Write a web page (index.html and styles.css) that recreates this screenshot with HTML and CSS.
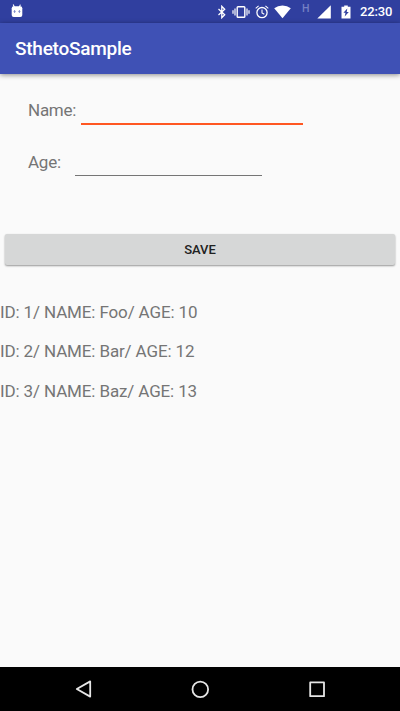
FILE: index.html
```
<!DOCTYPE html>
<html lang="en">

<head>
    <meta charset="UTF-8">
    <meta name="viewport" content="width=device-width, initial-scale=1.0">
    <title>SthetoSample</title>
    <link rel="stylesheet" href="styles.css">
</head>

<body>
    <div class="status-bar">
        <svg class="android" width="12" height="14" viewBox="0 0 12 14">
            <path d="M2.2 .6l1.2 2.6M9.4 .6L8.3 3.2" stroke="#fff" stroke-width="1.1" />
            <rect x=".7" y="2.3" width="10.6" height="10.6" rx="2" fill="#fff" />
            <path d="M3.6 6v3M2.6 7.5h2M8.4 6v3M7.4 7.5h2" stroke="#7c88c8" stroke-width=".9" />
        </svg>
        <div class="status-icons">
            <svg width="10" height="14" viewBox="0 0 10 14">
                <path d="M1.5 4l6.2 5.8L4.8 12.7V1.3L7.7 4.2 1.5 10" fill="none" stroke="#fff" stroke-width="1.3" />
            </svg>
            <svg class="vibrate" width="18" height="14" viewBox="0 0 18 14">
                <rect x="5.2" y="1.7" width="7.6" height="10.6" rx=".8" fill="none" stroke="#fff" stroke-width="1.4" />
                <path d="M3 3.5v7M15 3.5v7M1 5.2v3.6M17 5.2v3.6" stroke="#fff" stroke-width="1.2" />
            </svg>
            <svg class="alarm" width="14" height="14" viewBox="0 0 14 14">
                <circle cx="7" cy="7.6" r="5.1" fill="none" stroke="#fff" stroke-width="1.3" />
                <path d="M.7 3.3l2.9-2.4M13.3 3.3l-2.9-2.4M7 4.6v3.3l2.3 1.4" fill="none" stroke="#fff" stroke-width="1.1" />
            </svg>
            <svg class="wifi" width="17" height="14" viewBox="0 0 17 14">
                <path d="M8.5 13.2L.2 3.2Q3.8.6 8.5.6t8.3 2.6z" fill="#fff" />
            </svg>
            <span class="network">H</span>
            <svg class="signal" width="14" height="14" viewBox="0 0 14 14">
                <path d="M13.8.2v13.3H.3z" fill="#fff" />
            </svg>
            <svg class="battery" width="10" height="14" viewBox="0 0 10 14">
                <path d="M.5 1.7h2.7V.6h3.6v1.1h2.7v11.7h-9z" fill="#fff" />
                <path d="M6.3 3.4L2.4 7.8h2.1l-.8 3.6L7.8 7H5.7z" fill="#303f9f" />
            </svg>
            <span class="time">22:30</span>
        </div>
    </div>

    <div class="header">
        <h1>SthetoSample</h1>
    </div>

    <div class="content">
        <div class="field">
            <label for="name">Name:</label>
            <input id="name" class="name-input" type="text">
        </div>
        <div class="field">
            <label for="age">Age:</label>
            <input id="age" class="age-input" type="text">
        </div>

        <button class="btn">SAVE</button>

        <ul class="list">
            <li>ID: 1/ NAME: Foo/ AGE: 10</li>
            <li>ID: 2/ NAME: Bar/ AGE: 12</li>
            <li>ID: 3/ NAME: Baz/ AGE: 13</li>
        </ul>
    </div>

    <div class="nav-bar">
        <svg width="20" height="20" viewBox="0 0 20 20">
            <path d="M17.2 2.4v15.2L3.8 10z" />
        </svg>
        <svg width="20" height="20" viewBox="0 0 20 20">
            <circle cx="10.3" cy="10.4" r="7.8" />
        </svg>
        <svg width="20" height="20" viewBox="0 0 20 20">
            <rect x="3.2" y="3.4" width="13.8" height="13.8" />
        </svg>
    </div>
</body>

</html>
```
FILE: styles.css
```
* {
    margin: 0;
    padding: 0;
    box-sizing: border-box;
}

body {
    width: 100%;
    height: 100vh;
    display: flex;
    flex-direction: column;
    overflow: hidden;
    background: #fafafa;
    color: #757575;
    font-family: Roboto, sans-serif;
}

.status-bar {
    height: 23px;
    padding: 0 8px 0 11px;
    display: flex;
    justify-content: space-between;
    background: #303f9f;
    color: #fff;
}

.status-bar svg {
    display: block;
    margin-top: 5px;
}

.status-bar .android {
    margin-top: 4px;
}

.status-icons {
    display: flex;
}

.vibrate {
    margin-left: 5px;
}

.alarm {
    margin-left: 5px;
}

.wifi {
    margin-left: 5px;
}

.network {
    width: 8px;
    margin-left: 11px;
    padding-top: 3px;
    font-size: 10.5px;
    font-weight: 500;
    line-height: 12px;
    color: #7580c4;
}

.signal {
    margin-left: 7px;
}

.battery {
    margin-left: 10px;
}

.time {
    width: 32px;
    margin-left: 9px;
    font-size: 13px;
    font-weight: 500;
    line-height: 24px;
    letter-spacing: -.15px;
    white-space: nowrap;
}

.header {
    height: 51px;
    padding-left: 15px;
    background: #3f51b5;
    color: #fff;
    box-shadow: 0 1px 5px rgba(0, 0, 0, .45);
}

.header h1 {
    font-size: 19px;
    font-weight: 500;
    line-height: 52px;
    letter-spacing: -.25px;
}

.content {
    flex: 1;
    padding-top: 24px;
}

.field {
    height: 52px;
    padding-left: 28px;
    display: flex;
    align-items: flex-start;
}

.field label {
    font-size: 17px;
    line-height: 25px;
    letter-spacing: -.25px;
}

.field input {
    height: 27px;
    margin-left: auto;
    border: none;
    outline: none;
    background: none;
    font-size: 17px;
}

.field .name-input {
    width: 222px;
    margin-right: 97px;
    border-bottom: 2px solid #ff5722;
}

.field .age-input {
    width: 187px;
    margin-right: 138px;
    height: 26px;
    border-bottom: 1px solid #757575;
}

.btn {
    display: block;
    width: 390px;
    height: 31px;
    margin: 32px 5px 0;
    border: none;
    border-radius: 2px;
    background: #d6d7d7;
    box-shadow: 0 1px 2px rgba(0, 0, 0, .4);
    color: #212121;
    font-family: inherit;
    font-size: 13px;
    font-weight: 500;
}

.list {
    margin-top: 28px;
    list-style: none;
    font-size: 17px;
    line-height: 39.3px;
    letter-spacing: -.13px;
}

.nav-bar {
    height: 44px;
    padding: 0 73px;
    display: flex;
    justify-content: space-between;
    align-items: center;
    background: #000;
}

.nav-bar svg {
    fill: none;
    stroke: #e6e6e6;
    stroke-width: 1.8;
    stroke-linejoin: round;
}
```
